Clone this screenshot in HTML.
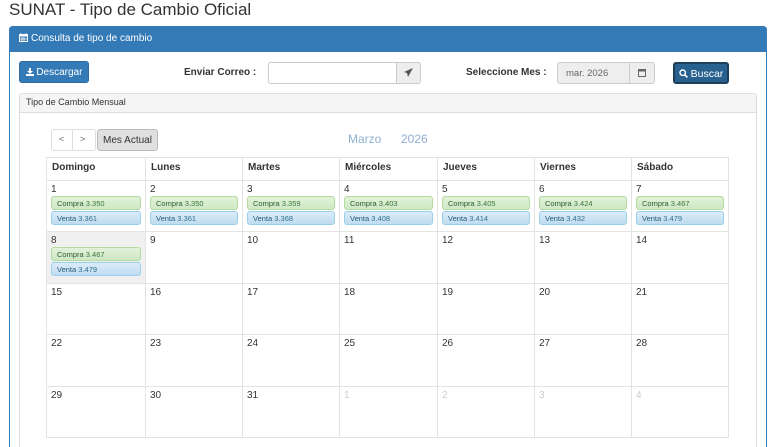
<!DOCTYPE html>
<html><head><meta charset="utf-8"><style>
*{box-sizing:border-box;margin:0;padding:0}
html,body{width:780px;height:447px;overflow:hidden}
body{background:#fff;font-family:"Liberation Sans",Arial,sans-serif;color:#333;position:relative}
.a{position:absolute}
h1{position:absolute;left:9px;top:0px;font-size:17px;font-weight:normal;color:#333}
.panel{left:9px;top:26px;width:758px;height:421px;border:1px solid #337ab7;border-bottom:none;border-radius:4px 4px 0 0}
.ph{left:9px;top:26px;width:758px;height:26px;background:#337ab7;border-radius:4px 4px 0 0;color:#fff;font-size:10px;padding:7px 0 0 10px}
.btn{font-size:10px;border-radius:3px;text-align:center}
.lbl{font-size:10px;font-weight:bold;color:#333}
.inp{border:1px solid #ccc;background:#fff}
.add{border:1px solid #ccc;background:#eee;color:#555;font-size:9px;text-align:center}
.in2{left:19px;top:93px;width:738px;height:354px;border:1px solid #ddd;border-bottom:none;border-radius:3px 3px 0 0}
.in2h{left:20px;top:94px;width:736px;height:19px;background:#f5f5f5;border-bottom:1px solid #ddd;font-size:9px;padding:3px 0 0 6px}
table{position:absolute;left:46px;top:157px;border-collapse:collapse;table-layout:fixed;width:683px}
td,th{border:1px solid #e3e3e3;vertical-align:top;text-align:left}
th{height:23px;font-size:10px;font-weight:bold;padding:4px 0 0 5px}
td{font-size:10px;padding:3px 0 0 4px;color:#333}
td.o{color:#ccc}
td.t{background:#f0f0f0}
.c,.v{margin:1px 4px 0 0;height:14px;font-size:7.5px;padding:2px 0 0 5px;border-radius:3px}
.c{background:linear-gradient(#e2f1da,#cfe8c3);border:1px solid #b2dba1;color:#3c763d;margin-top:1px}
.v{background:linear-gradient(#dcecf8,#bfdcf0);border:1px solid #9acfea;color:#31708f}
.c b,.v b{font-weight:normal;color:#2b5a2c}
.v b{color:#245a78}
</style></head><body>
<h1>SUNAT - Tipo de Cambio Oficial</h1>
<div class="a panel"></div>
<div class="a ph">
<svg width="9" height="9" viewBox="0 0 9 9" style="vertical-align:-1px;margin-right:3px"><rect x="0.5" y="1.5" width="8" height="7" fill="none" stroke="#fff"/><rect x="0.5" y="1.5" width="8" height="2" fill="#fff"/><path d="M2 0v2M7 0v2M3 4v4M5 4v4M1 6h7" stroke="#fff" stroke-width="0.8"/></svg>Consulta de tipo de cambio</div>

<div class="a btn" style="left:19px;top:61px;width:70px;height:22px;background:#337ab7;border:1px solid #2e6da4;color:#fff;padding-top:5px">
<svg width="8" height="8" viewBox="0 0 8 8" style="vertical-align:-1px"><path d="M3 0h2v3h2L4 6 1 3h2z" fill="#fff"/><rect x="0" y="6" width="8" height="2" fill="#fff"/></svg> Descargar</div>

<div class="a lbl" style="left:184px;top:67px">Enviar Correo :</div>
<div class="a inp" style="left:268px;top:62px;width:129px;height:22px;border-radius:3px 0 0 3px"></div>
<div class="a add" style="left:396px;top:62px;width:25px;height:22px;border-radius:0 3px 3px 0;padding-top:5px">
<svg width="9" height="9" viewBox="0 0 9 9"><path d="M9 0L0 4l3 1 1 4z" fill="#555"/></svg></div>

<div class="a lbl" style="left:466px;top:67px">Seleccione Mes :</div>
<div class="a inp" style="left:557px;top:62px;width:73px;height:22px;background:#eee;border-radius:3px 0 0 3px;font-size:9.5px;color:#666;padding:5px 0 0 8px">mar. 2026</div>
<div class="a add" style="left:629px;top:62px;width:26px;height:22px;border-radius:0 3px 3px 0;padding-top:5px">
<svg width="8" height="9" viewBox="0 0 8 9"><rect x="0.5" y="1.5" width="7" height="7" fill="none" stroke="#666"/><rect x="0.5" y="1.5" width="7" height="2" fill="#666"/></svg></div>

<div class="a btn" style="left:673px;top:62px;width:56px;height:22px;background:#286090;border:2px solid #1d3f5a;color:#fff;padding-top:4px;font-size:10.5px">
<svg width="9" height="9" viewBox="0 0 9 9" style="vertical-align:-1px"><circle cx="3.7" cy="3.7" r="2.7" fill="none" stroke="#fff" stroke-width="1.4"/><path d="M5.6 5.6L8.4 8.4" stroke="#fff" stroke-width="1.6"/></svg> Buscar</div>

<div class="a in2"></div>
<div class="a in2h">Tipo de Cambio Mensual</div>

<div class="a" style="left:51px;top:129px;width:45px;height:22px;border:1px solid #ddd;border-radius:3px;background:#fff"></div>
<div class="a" style="left:72px;top:129px;width:1px;height:22px;background:#ddd"></div>
<div class="a" style="left:59px;top:134px;font-size:9px;color:#666">&lt;</div>
<div class="a" style="left:80px;top:134px;font-size:9px;color:#666">&gt;</div>
<div class="a" style="left:97px;top:129px;width:61px;height:22px;border:1px solid #bbb;border-radius:3px;background:#e0e0e0;font-size:10px;color:#333;text-align:center;padding-top:5px">Mes Actual</div>
<div class="a" style="left:348px;top:132px;font-size:12px;color:#8fb0d0">Marzo</div>
<div class="a" style="left:401px;top:132px;font-size:12px;color:#8fb0d0">2026</div>

<table>
<colgroup><col style="width:99px"><col style="width:97px"><col style="width:97px"><col style="width:98px"><col style="width:97px"><col style="width:97px"><col style="width:97px"></colgroup>
<tr><th>Domingo</th><th>Lunes</th><th>Martes</th><th>Miércoles</th><th>Jueves</th><th>Viernes</th><th>Sábado</th></tr>
<tr style="height:51px">
<td>1<div class="c"><b>Compra</b> 3.350</div><div class="v"><b>Venta</b> 3.361</div></td>
<td>2<div class="c"><b>Compra</b> 3.350</div><div class="v"><b>Venta</b> 3.361</div></td>
<td>3<div class="c"><b>Compra</b> 3.359</div><div class="v"><b>Venta</b> 3.368</div></td>
<td>4<div class="c"><b>Compra</b> 3.403</div><div class="v"><b>Venta</b> 3.408</div></td>
<td>5<div class="c"><b>Compra</b> 3.405</div><div class="v"><b>Venta</b> 3.414</div></td>
<td>6<div class="c"><b>Compra</b> 3.424</div><div class="v"><b>Venta</b> 3.432</div></td>
<td>7<div class="c"><b>Compra</b> 3.467</div><div class="v"><b>Venta</b> 3.479</div></td>
</tr>
<tr style="height:52px">
<td class="t">8<div class="c"><b>Compra</b> 3.467</div><div class="v"><b>Venta</b> 3.479</div></td>
<td>9</td><td>10</td><td>11</td><td>12</td><td>13</td><td>14</td></tr>
<tr style="height:51px"><td>15</td><td>16</td><td>17</td><td>18</td><td>19</td><td>20</td><td>21</td></tr>
<tr style="height:52px"><td>22</td><td>23</td><td>24</td><td>25</td><td>26</td><td>27</td><td>28</td></tr>
<tr style="height:51px"><td>29</td><td>30</td><td>31</td><td class="o">1</td><td class="o">2</td><td class="o">3</td><td class="o">4</td></tr>
</table>
</body></html>
